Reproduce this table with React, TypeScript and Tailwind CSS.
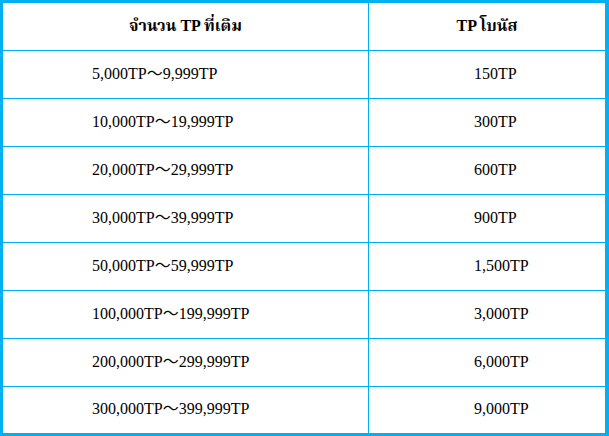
import React from "react";

const rows: [string, string][] = [
  ["5,000TP～9,999TP", "150TP"],
  ["10,000TP～19,999TP", "300TP"],
  ["20,000TP～29,999TP", "600TP"],
  ["30,000TP～39,999TP", "900TP"],
  ["50,000TP～59,999TP", "1,500TP"],
  ["100,000TP～199,999TP", "3,000TP"],
  ["200,000TP～299,999TP", "6,000TP"],
  ["300,000TP～399,999TP", "9,000TP"],
];

export default function App() {
  return (
    <div
      className="w-[609px] h-[436px] overflow-hidden bg-white text-[16px] text-[#000]"
      style={{ fontFamily: '"Liberation Serif", "Times New Roman", "Noto Serif Thai", "Noto Sans Thai", "Noto Sans CJK SC", serif' }}
    >
      <div className="border-[#00b0f0] border-t-[3px] border-l-[3px] border-r-[4px] border-b-[3px] bg-[#00b0f0] grid grid-cols-[365px_236px] gap-px">
        <div className="bg-white h-[47px] flex items-center justify-center font-bold pb-[2px]">จำนวน TP ที่เติม</div>
        <div className="bg-white h-[47px] flex items-center justify-center font-bold pb-[2px]">TP โบนัส</div>
        {rows.map(([a, b], i) => (
          <React.Fragment key={i}>
            <div className={`bg-white ${i === rows.length - 1 ? "h-[46px]" : "h-[47px]"} flex items-center pl-[89px] pb-[2px]`}>{a}</div>
            <div className={`bg-white ${i === rows.length - 1 ? "h-[46px]" : "h-[47px]"} flex items-center pl-[105px] pb-[2px]`}>{b}</div>
          </React.Fragment>
        ))}
      </div>
    </div>
  );
}
